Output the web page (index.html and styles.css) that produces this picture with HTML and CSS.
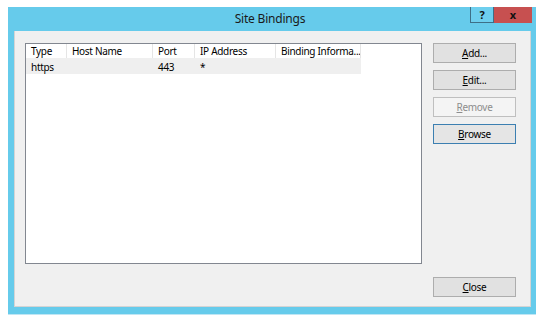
FILE: index.html
```html
<!DOCTYPE html>
<html>
<head>
<meta charset="utf-8">
<link rel="stylesheet" href="styles.css">
</head>
<body>
<div class="window">
  <div class="titlebar">
    <div class="spacer"></div>
    <div class="title">Site Bindings</div>
    <div class="caption-buttons">
      <div class="cap help">?</div>
      <div class="cap close-x">x</div>
    </div>
  </div>
  <div class="client">
    <div class="list">
      <div class="row header">
        <div class="cell c1">Type</div>
        <div class="cell c2">Host Name</div>
        <div class="cell c3">Port</div>
        <div class="cell c4">IP Address</div>
        <div class="cell c5">Binding Informa...</div>
      </div>
      <div class="row item">
        <div class="cell c1">https</div>
        <div class="cell c2"></div>
        <div class="cell c3">443</div>
        <div class="cell c4">*</div>
        <div class="cell c5"></div>
      </div>
    </div>
    <div class="buttons">
      <div class="btn"><u>A</u>dd...</div>
      <div class="btn"><u>E</u>dit...</div>
      <div class="btn disabled"><u>R</u>emove</div>
      <div class="btn focus"><u>B</u>rowse</div>
    </div>
    <div class="btn close-btn"><u>C</u>lose</div>
  </div>
</div>
</body>
</html>
```
FILE: styles.css
```css
html, body {
  margin: 0;
  padding: 0;
  background: #ffffff;
}
body {
  font-family: "Noto Sans", "Open Sans", sans-serif;
  font-size: 10px;
  letter-spacing: -0.3px;
  color: #000;
}
.window {
  margin: 7px 0 0 8px;
  width: 528px;
  height: 308px;
  background: #66cbeb;
  box-sizing: border-box;
  padding: 0 5px 7px 6px;
  display: flex;
  flex-direction: column;
  border-bottom: 1px solid #bfe6f4;
}
.titlebar {
  height: 24px;
  display: grid;
  grid-template-columns: 1fr auto 1fr;
  align-items: start;
}
.title {
  font-size: 12px;
  letter-spacing: -0.2px;
  color: #1a1a1a;
  line-height: 24px;
  padding-right: 5px;
}
.caption-buttons {
  display: flex;
  justify-content: flex-end;
  margin-right: -1px;
}
.cap {
  height: 16px;
  box-sizing: border-box;
  text-align: center;
  font-weight: bold;
  font-size: 11px;
  letter-spacing: 0;
  line-height: 15px;
}
.help {
  width: 24px;
  border: 1px solid #3e6f87;
  border-top: none;
  background: #6ecfee;
  color: #111;
}
.close-x {
  width: 38px;
  background: #c75050;
  color: #111;
}
.client {
  flex: 1;
  background: #f0f0f0;
  border: 1px solid #d4d4d4;
  border-top: none;
  padding: 12px 10px 9px 10px;
  display: grid;
  grid-template-columns: 397px 83px;
  grid-template-rows: 1fr 20px;
  column-gap: 11px;
  row-gap: 13px;
}
.list {
  grid-column: 1;
  grid-row: 1;
  background: #fff;
  border: 1px solid #828790;
}
.row {
  display: flex;
  box-sizing: border-box;
}
.header {
  height: 14px;
  line-height: 13px;
  padding-top: 1px;
}
.item {
  height: 16px;
  line-height: 14px;
  padding-top: 2px;
  background: #efefef;
  width: 335px;
}
.cell {
  box-sizing: border-box;
  padding-left: 5px;
  white-space: nowrap;
  overflow: hidden;
}
.header .cell {
  border-right: 1px solid #e5e5e5;
  margin-top: -1px;
  padding-top: 1px;
  height: 14px;
}
.c1 { width: 41px; }
.c2 { width: 86px; }
.c3 { width: 42px; }
.c4 { width: 81px; }
.c5 { width: 85px; }
.buttons {
  grid-column: 2;
  grid-row: 1;
  display: flex;
  flex-direction: column;
  gap: 7px;
}
.btn {
  height: 20px;
  box-sizing: border-box;
  background: #e1e1e1;
  border: 1px solid #adadad;
  text-align: center;
  line-height: 19px;
  color: #000;
}
.btn.disabled {
  background: #f4f4f4;
  border-color: #bfbfbf;
  color: #8d8d8d;
}
.btn.focus {
  border-color: #3c7fb1;
  background: #e5e5e5;
}
.close-btn {
  grid-column: 2;
  grid-row: 2;
}
```
